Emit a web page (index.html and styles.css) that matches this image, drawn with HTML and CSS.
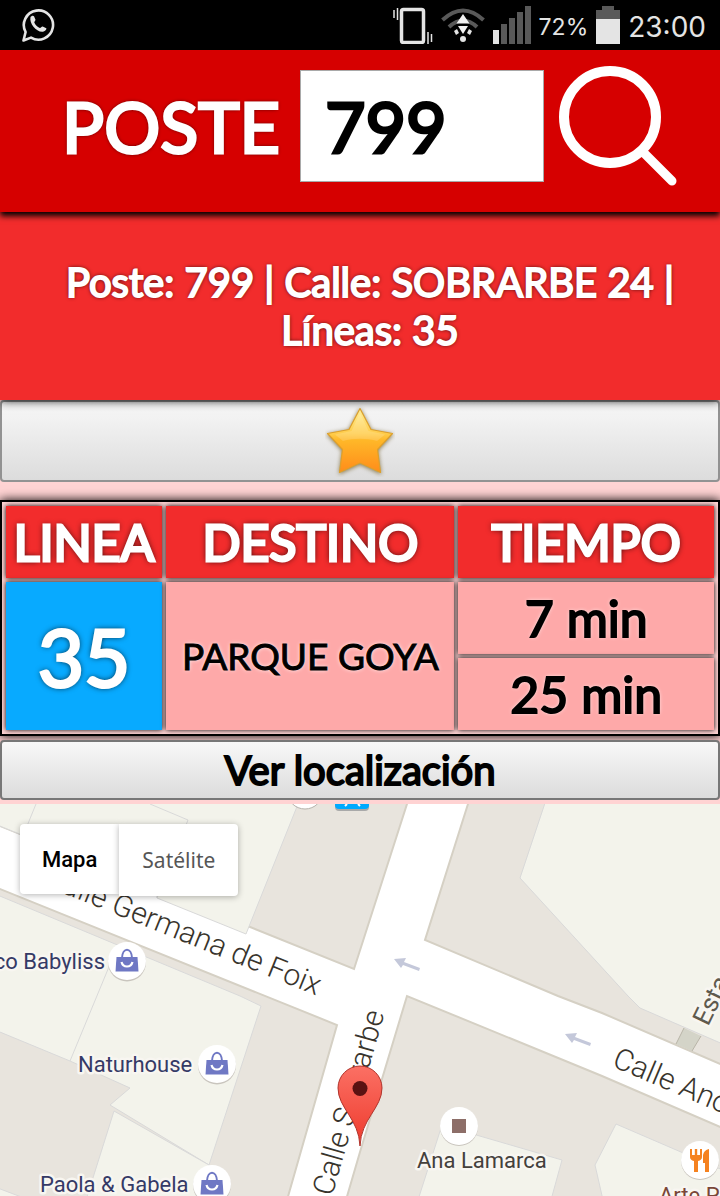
FILE: index.html
```html
<!DOCTYPE html>
<html lang="es">
<head>
<meta charset="utf-8">
<meta name="viewport" content="width=device-width, initial-scale=1">
<title>Poste 799</title>
<link rel="stylesheet" href="styles.css">
</head>
<body>
<div class="status">
  <svg class="status-chat" width="34" height="36" viewBox="0 0 34 36" aria-hidden="true">
    <path d="M2.5 33.5 4.6 25A14.6 14.6 0 1 1 10 30.6Z" fill="none" stroke="#e4e4e4" stroke-width="2.600" stroke-linejoin="round"/>
    <path d="M9.500 10c1.500-1.600 2.800-1.600 3.500-.8l1.500 3.500c0 1-1.500 2-1.200 2.800 1 2.500 3 4.500 5.500 5.500 1 .3 1.800-1.800 2.900-1.500l3.600 1.800c.6.8-.7 3-3.300 3.400-6.500.8-14-8-12.500-14.700Z" fill="#e4e4e4"/>
  </svg>
  <div class="status-right">
    <svg width="40" height="38" viewBox="0 0 40 38" aria-hidden="true">
      <rect x="8.500" y="3.500" width="22" height="33" rx="2" fill="none" stroke="#e4e4e4" stroke-width="3.500"/>
      <path d="M1 4v8M4.500 2v12M35 26v12M38.500 28v8" stroke="#e4e4e4" stroke-width="1.500"/>
    </svg>
    <svg width="44" height="36" viewBox="0 0 44 36" aria-hidden="true">
      <path d="M1.500 13Q22-6 42.500 13M8 20Q22 7 36 20" fill="none" stroke="#595959" stroke-width="4"/>
      <path d="M22 7 28.500 16.500H15.500ZM17 19H27L22 27Z" fill="#f2f2f2"/>
      <path d="M13 24l3-2 2 4-3 2ZM31 24l-3-2-2 4 3 2Z" fill="#e4e4e4"/>
      <circle cx="22" cy="32" r="3" fill="#e4e4e4"/>
    </svg>
    <svg width="38" height="38" viewBox="0 0 38 38" aria-hidden="true">
      <path d="M8 18h6v20H8zM16 12h6v26h-6zM24 6h6v32h-6zM32 0h6v38h-6z" fill="#595959"/>
      <path d="M0 24h6v14H0z" fill="#e4e4e4"/>
    </svg>
    <span class="battery">72%</span>
    <svg width="24" height="38" viewBox="0 0 24 38" aria-hidden="true">
      <path d="M6 0h12v4h6v9H0V4h6z" fill="#595959"/>
      <path d="M0 13h24v25H0z" fill="#e4e4e4"/>
    </svg>
    <span class="clock">23:00</span>
  </div>
</div>

<form class="search">
  <label class="search-label" for="poste">POSTE</label>
  <input class="search-input" id="poste" type="text" value="799">
  <button class="search-button" type="button" aria-label="Buscar">
    <svg width="120" height="122" viewBox="0 0 120 122" aria-hidden="true">
      <circle cx="52" cy="52" r="46" fill="none" stroke="#fff" stroke-width="10"/>
      <path d="M84 86 114 116" stroke="#fff" stroke-width="9" stroke-linecap="round"/>
    </svg>
  </button>
</form>

<main class="content">
  <h1 class="info">Poste: 799 | Calle: SOBRARBE 24 | Líneas: 35</h1>
  <button class="bar favorite" type="button" aria-label="Favorito">
    <svg width="70" height="72" viewBox="0 0 70 72" aria-hidden="true">
      <defs>
        <linearGradient id="gold" x1="0" y1="0" x2="0" y2="1">
          <stop offset="0" stop-color="#fff09a"/>
          <stop offset=".4" stop-color="#ffcb48"/>
          <stop offset=".5" stop-color="#ffb728"/>
          <stop offset="1" stop-color="#ff8c1a"/>
        </linearGradient>
      </defs>
      <path class="star" d="M35 3.500 46 24.500 67.500 28.500 52.500 44.500 55.500 67.500 35 58 14.500 67.500 17.500 44.500 2.500 28.500 24 24.500Z" fill="url(#gold)" stroke="#dda02c" stroke-width="1.200" stroke-linejoin="round"/>
      <path d="M35 8 43.500 26 60 29.500 52 36C42 33 28 33 18 36L10 29.500 26.500 26Z" fill="#fff" opacity=".16"/>
    </svg>
  </button>

  <table class="times">
    <colgroup><col class="col-line"><col class="col-dest"><col class="col-time"></colgroup>
    <thead>
      <tr><th scope="col">LINEA</th><th scope="col">DESTINO</th><th scope="col">TIEMPO</th></tr>
    </thead>
    <tbody>
      <tr><td class="line" rowspan="2">35</td><td class="dest" rowspan="2">PARQUE GOYA</td><td>7 min</td></tr>
      <tr><td>25 min</td></tr>
    </tbody>
  </table>

  <button class="bar locate" type="button">Ver localización</button>

  <section class="map" aria-label="Mapa">
    <svg class="map-canvas" viewBox="0 804 720 392" preserveAspectRatio="xMidYMin slice">
      <defs>
        <linearGradient id="pin" x1="0" y1="0" x2="0" y2="1">
          <stop offset="0" stop-color="#fb7064"/>
          <stop offset="1" stop-color="#ee3a2d"/>
        </linearGradient>
        <g id="shop">
          <circle cy="1.500" r="19" fill="#c9c5be"/>
          <circle r="19" fill="#fff"/>
          <path d="M-10.500-4H10.500L11.500 10.500H-11.500Z" fill="#6f78c4"/>
          <path d="M-5-3C-4.500-14 4.500-14 5-3" fill="none" stroke="#6f78c4" stroke-width="2"/>
          <path d="M-5.500 1C-4 7 4 7 5.500 1" fill="none" stroke="#fff" stroke-width="2.200"/>
        </g>
        <path id="arrow" d="M0 0 12-1 10 3 26 9 25 12 9 6 7 9Z" fill="#c4c8da"/>
      </defs>
      <rect y="804" width="720" height="392" fill="#e8e4dd"/>
      <path class="road" d="M-5 824 354 969 407 804 408 800H470L468 804 425 940 558 996 602 1013 725 1066V1129L602 1076 407 996 360 1152 346 1200H287L337 1025-5 887Z"/>
      <g class="building">
        <path d="M-5 804V824L157 890V898L246 934 298 804V800H-5Z"/>
        <path d="M36 804 27 826M150 804 188 820 157 898"/>
        <path d="M-5 894 240 996 261 1006 209 1165 110 1105 130 1088 70 1061-5 1030Z"/>
        <path d="M118 945 70 1061"/>
        <path d="M114 1111 209 1165 199 1200H86Z"/>
        <path d="M-5 1187 24 1198H-5Z"/>
        <path d="M546 800 520 878 628 996 640 1008 725 1045V800Z"/>
        <path d="M442 1125 562 1160 551 1200H418Z"/>
        <path d="M616 1124 725 1171V1200H603L595 1165Z"/>
      </g>
      <path d="M684 1028 701 1036 692 1051 676 1044Z" fill="#d4d4c8"/>
      <path d="M684 1028 676 1044M701 1036 692 1051" stroke="#b9b5a8"/>
      <use href="#arrow" x="394" y="959"/>
      <use href="#arrow" x="565" y="1034"/>
      <circle cx="305" cy="791" r="18" fill="#fff" stroke="#b5b2ab"/>
      <rect x="335" y="782" width="34" height="29" rx="4" fill="#a9a9a9"/>
      <rect x="335" y="780" width="34" height="29" rx="4" fill="#00aaff"/>
      <path d="M347 804 345 806M358 804 360 806" stroke="#fff" stroke-width="2"/>

      <g class="street">
        <text transform="translate(43 885) rotate(22)">Calle Germana de Foix</text>
        <text transform="translate(332 1197) rotate(-74)">Calle Sobrarbe</text>
        <text transform="translate(611 1066) rotate(23)">Calle Ano</text>
      </g>
      <text class="path-name" transform="translate(708 1027) rotate(-64)">Esta</text>

      <g class="shop-name">
        <text x="105" y="969" text-anchor="end">co Babyliss</text>
        <text x="78" y="1072">Naturhouse</text>
        <text x="40" y="1192">Paola &amp; Gabela</text>
      </g>
      <use href="#shop" x="127" y="961"/>
      <use href="#shop" x="217" y="1064"/>
      <use href="#shop" x="212" y="1184"/>
      <circle cx="459" cy="1127" r="19" fill="#c9c5be"/>
      <circle cx="459" cy="1126" r="19" fill="#fff"/>
      <rect x="452" y="1119" width="14" height="14" fill="#8d6e68"/>
      <text class="place-name" x="417" y="1168">Ana Lamarca</text>
      <circle cx="700" cy="1161" r="19" fill="#c9c5be"/>
      <circle cx="700" cy="1160" r="19" fill="#fff"/>
      <path d="M690 1149H692V1155H694.800V1149H697.200V1155H700V1149H702V1157Q702 1160 698 1161V1172H694V1161Q690 1160 690 1157Z" fill="#f58220"/>
      <path d="M709 1149V1172H705V1163H703V1155Q704 1150 709 1149Z" fill="#f58220"/>
      <text class="food-name" x="659" y="1203">Arte P</text>

      <path d="M360 1146C359 1119 338 1108 338 1088A22 22 0 0 1 382 1088C382 1108 361 1119 360 1146Z" fill="url(#pin)" stroke="#b0342c"/>
      <circle cx="360" cy="1088.500" r="7.500" fill="#5a1212"/>
    </svg>
    <div class="map-types">
      <button class="map-type is-active" type="button">Mapa</button>
      <button class="map-type" type="button">Satélite</button>
    </div>
  </section>
</main>
</body>
</html>
```
FILE: styles.css
```css
* { box-sizing: border-box; }

body {
  margin: 0;
  min-height: 100vh;
  display: flex;
  flex-direction: column;
  background: #ffd3d3;
  font-family: Lato, "Open Sans", sans-serif;
  font-weight: 400;
}

button, input { font: inherit; margin: 0; }
svg { display: block; }

.status {
  display: flex;
  align-items: center;
  justify-content: space-between;
  height: 50px;
  padding: 0 14px 0 21px;
  background: #000;
  color: #e4e4e4;
  font-family: Inter, Roboto, sans-serif;
  font-weight: 400;
}
.status-right { display: flex; align-items: center; gap: 8px; }
.battery { font-size: 23px; margin-top: 4px; }
.clock { font-size: 28px; margin-top: 4px; }

.search {
  position: relative;
  z-index: 1;
  display: flex;
  align-items: center;
  justify-content: center;
  gap: 14px;
  padding: 15px 20px 25px 40px;
  background: #d60000;
  box-shadow: 0 4px 6px #000;
}
.search-label {
  margin-right: 6px;
  color: #fff;
  font-size: 70px;
  line-height: 84px;
  -webkit-text-stroke: 3px #fff;
  text-shadow: 0 0 4px #000;
}
.search-input {
  width: 244px;
  height: 112px;
  padding: 0 24px;
  border: 1px solid #a9a9a9;
  border-radius: 0;
  background: #fff;
  color: #000;
  font-size: 70px;
  -webkit-text-stroke: 3px #000;
}
.search-button {
  padding: 0;
  border: 0;
  background: none;
}

.content {
  flex: 1;
  display: flex;
  flex-direction: column;
}

.info {
  position: relative;
  margin: 0;
  padding: 46px 20px 46px 40px;
  background: #f22c2c;
  color: #fff;
  font-size: 40px;
  font-weight: 400;
  line-height: 48px;
  text-align: center;
  -webkit-text-stroke: 2px #fff;
  text-shadow: 0 0 4px #000;
  box-shadow: 0 0 10px #000;
}

.bar {
  display: flex;
  align-items: center;
  justify-content: center;
  width: 100%;
  border: 2px solid #777;
  border-radius: 4px;
  background: linear-gradient(#f8f8f8, #dcdcdc);
  color: #000;
}
.favorite { height: 82px; padding: 0; border-color: #929292; }
.star { filter: drop-shadow(0 1px 2px #8a7a50); }
.locate {
  position: relative;
  height: 60px;
  margin: 4px 0;
  padding: 0;
  font-size: 40px;
  line-height: 48px;
  -webkit-text-stroke: 2px #000;
}

.times {
  width: 100%;
  margin-top: 18px;
  border: 2px solid #000;
  border-collapse: separate;
  border-spacing: 4px;
  table-layout: fixed;
  box-shadow: 0 0 10px #000;
  text-align: center;
}
.col-line { width: 22.3%; }
.col-dest { width: 41.2%; }
.times th, .times td {
  height: 72px;
  padding: 0;
  box-shadow: 0 0 5px #000;
  font-size: 50px;
  font-weight: 400;
  line-height: 60px;
}
.times th {
  background: #f22c2c;
  color: #fff;
  -webkit-text-stroke: 3px #fff;
  text-shadow: 0 0 6px #000;
}
.times td {
  background: #fea9a9;
  -webkit-text-stroke: 2px #000;
  text-shadow: 0 0 4px #fff;
}
.times .line {
  background: #08aaff;
  color: #fff;
  font-size: 80px;
  -webkit-text-stroke: 3px #fff;
  text-shadow: 0 0 6px #000;
}
.times .dest { font-size: 37px; -webkit-text-stroke: 1px #000; }

.map {
  position: relative;
  flex: 1;
  min-height: 392px;
  overflow: hidden;
}
.map-canvas {
  position: absolute;
  inset: 0;
  width: 100%;
  height: 100%;
  font-family: Roboto, sans-serif;
}
.map-types {
  position: absolute;
  top: 20px;
  left: 20px;
  display: flex;
  align-items: flex-start;
}
.map-type {
  height: 72px;
  padding: 0 23px;
  border: 0;
  border-radius: 0 4px 4px 0;
  background: #fff;
  box-shadow: 0 1px 6px rgba(0, 0, 0, .3);
  color: #565656;
  font-family: "Noto Sans", sans-serif;
  font-size: 21px;
}
.map-type.is-active {
  height: 70px;
  padding: 0 22px;
  border-radius: 4px 0 0 4px;
  color: #000;
  font-family: Roboto, sans-serif;
  font-size: 22px;
  font-weight: 500;
}

.road { fill: #fff; stroke: #d5d0c4; stroke-width: 2; }
.building { fill: #f3f3eb; stroke: #d9d9d9; }
.building path:nth-child(2), .building path:nth-child(4) { fill: none; }
.street { font-size: 30px; font-weight: 300; fill: #38342c; }
.path-name, .shop-name, .place-name, .food-name {
  font-size: 22px;
  paint-order: stroke;
  stroke: #f8f6f1;
  stroke-width: 5px;
  stroke-linejoin: round;
}
.path-name { font-size: 26px; fill: #5f5a4e; }
.shop-name { fill: #353a66; }
.place-name { fill: #44403c; }
.food-name { fill: #794638; }
```
